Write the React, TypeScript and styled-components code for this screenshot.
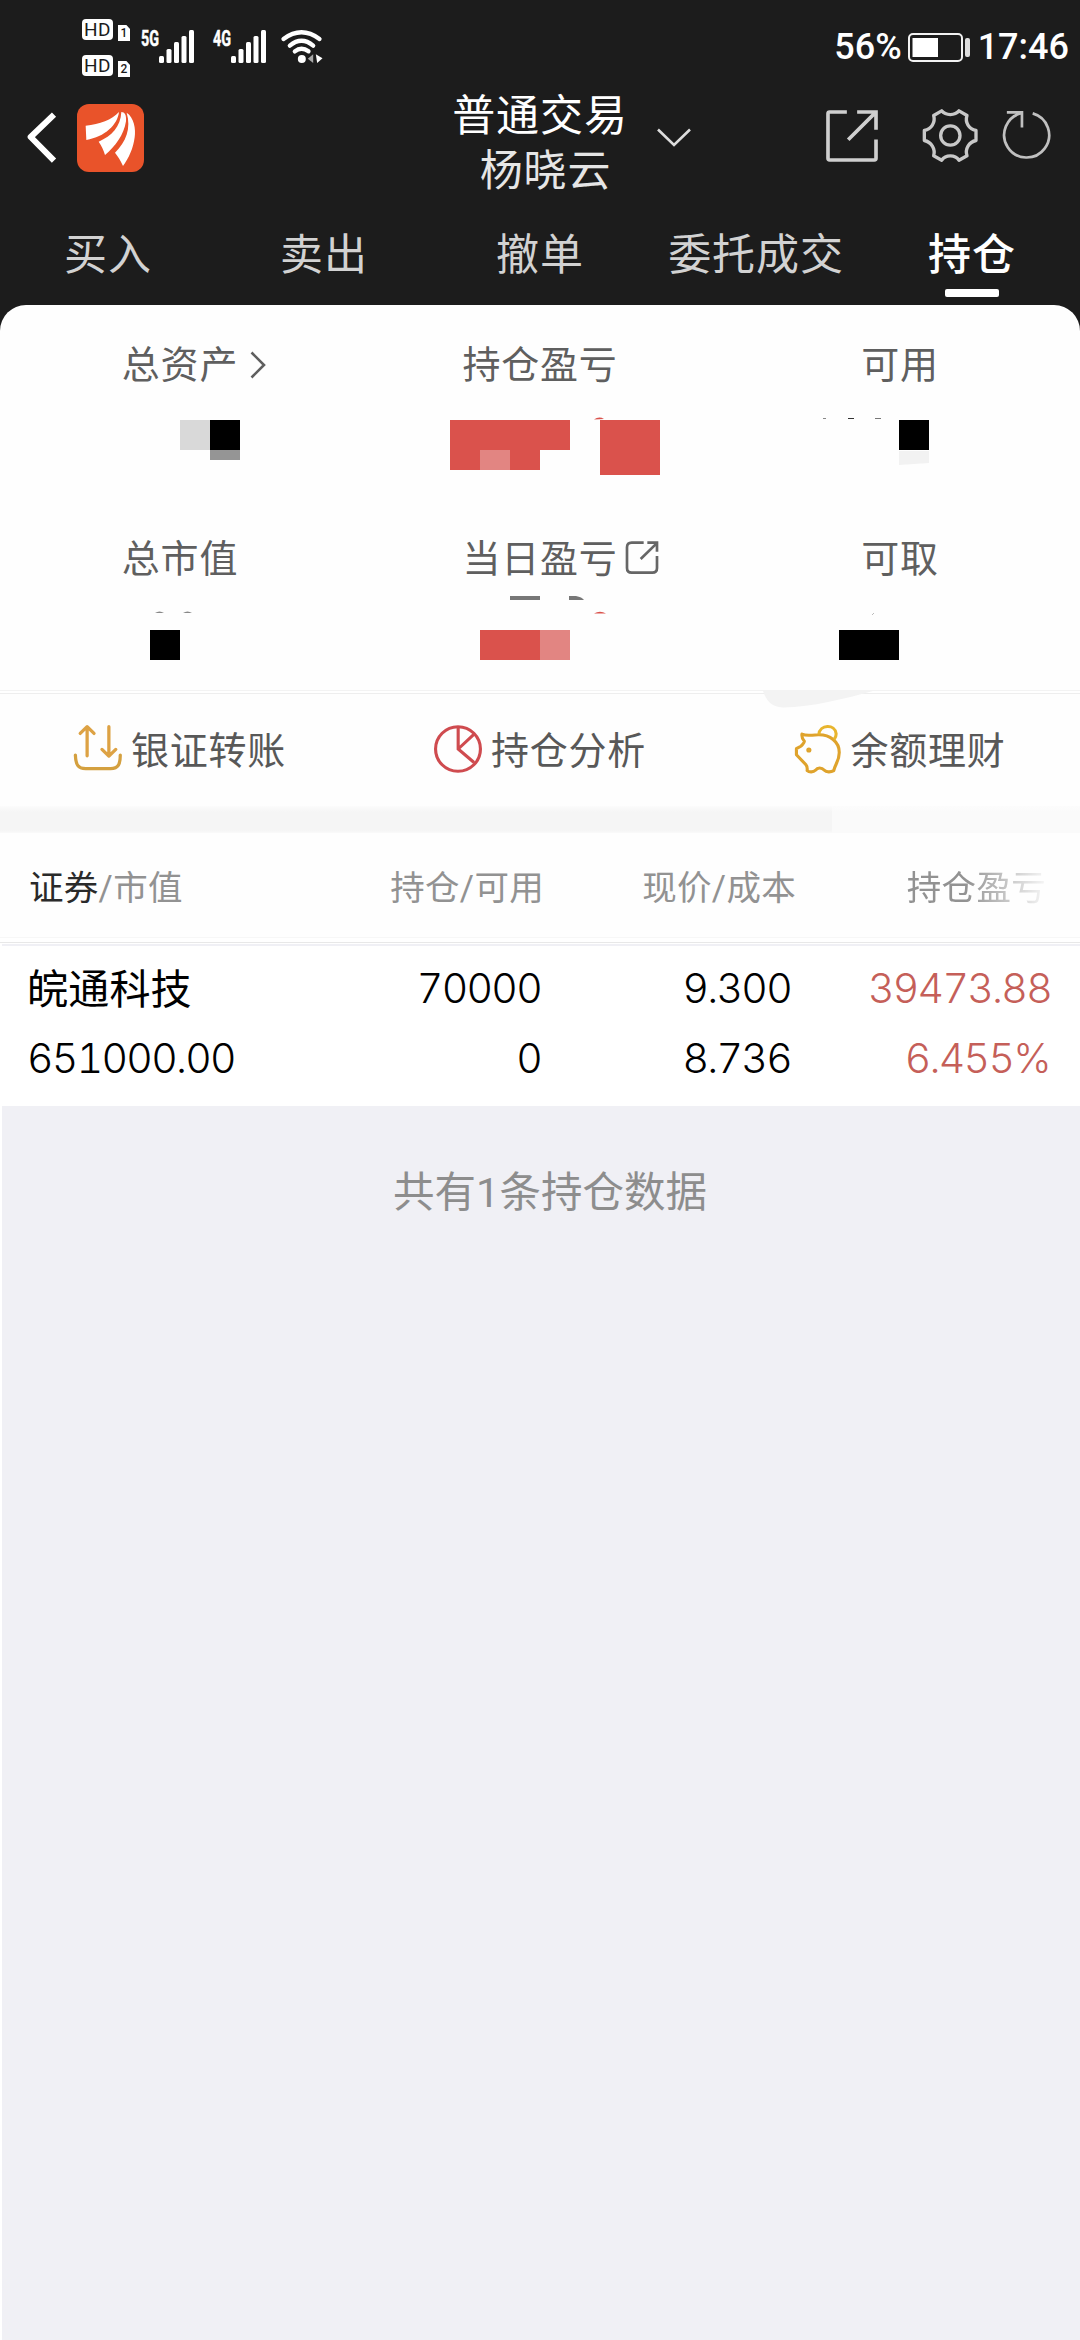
import React from 'react';
import styled, { createGlobalStyle } from 'styled-components';

const Global = createGlobalStyle`
  * { box-sizing: border-box; }
  body { margin: 0; background: #fff; font-family: Roboto, "Noto Sans CJK SC", sans-serif; }
  svg { display: block; overflow: visible; }
`;

const Screen = styled.div`
  width: 1080px;
  height: 2340px;
  display: flex;
  flex-direction: column;
  background: #fff;
  overflow: hidden;
`;

const Top = styled.header`
  background: #1c1c1c;
  height: 305px;
  flex: none;
`;

const StatusBar = styled.div`
  height: 92px;
  display: flex;
  justify-content: space-between;
  align-items: flex-start;
  padding: 19px 11px 0 82px;
`;

const StatusGroup = styled.div`
  display: flex;
  align-items: flex-start;
`;

const HdColumn = styled.div`
  display: flex;
  flex-direction: column;
  gap: 15px;
  margin-right: 11px;
`;

const HdLine = styled.div`
  display: flex;
  align-items: flex-end;
  gap: 5px;
  height: 21px;
`;

const HdBadge = styled.span`
  width: 31px;
  height: 21px;
  border-radius: 4px;
  background: #fff;
  color: #1c1c1c;
  font: 400 19px/22px Roboto, sans-serif;
  letter-spacing: 0.6px;
  text-align: center;
`;

const SimBadge = styled.span`
  width: 12px;
  height: 16px;
  margin-bottom: -1px;
  background: #fff;
  color: #1c1c1c;
  clip-path: polygon(0 0, 70% 0, 100% 25%, 100% 100%, 0 100%);
  font: 500 12px/17px Roboto, sans-serif;
  text-align: center;
`;

const SignalSlot = styled.div<{ $gap: number }>`
  margin-top: 11px;
  margin-right: ${(p) => p.$gap}px;
`;

const StatusText = styled.span`
  color: #fff;
  font: 500 36px/42px Roboto, sans-serif;
  margin-top: 7px;
`;

const BatterySlot = styled.div`
  margin: 14px 8px 0 6px;
`;

const TitleBar = styled.div`
  height: 108px;
  display: grid;
  grid-template-columns: 1fr 1fr 1fr;
`;

const TitleLeft = styled.div`
  display: flex;
  gap: 21px;
  padding: 12px 0 0 28px;
`;

const TitleCenter = styled.div`
  display: flex;
  justify-content: center;
  padding-left: 63px;
  gap: 29px;
`;

const TitleText = styled.div`
  display: flex;
  flex-direction: column;
  align-items: center;
  font-size: 43px;
  line-height: 55px;
  letter-spacing: 0.9px;
  color: #fff;
  margin-top: -3px;
  white-space: nowrap;
`;

const AccountName = styled.span`
  color: #e6e6e6;
  padding-left: 11px;
`;

const CaretSlot = styled.div`
  padding-top: 36px;
`;

const TitleRight = styled.div`
  display: flex;
  justify-content: flex-end;
  padding-right: 28px;
`;

const IconSlot = styled.div<{ $top: number; $left: number }>`
  padding-top: ${(p) => p.$top}px;
  margin-left: ${(p) => p.$left}px;
`;

const Tabs = styled.nav`
  height: 105px;
  display: grid;
  grid-template-columns: repeat(5, 1fr);
`;

const Tab = styled.div<{ $active?: boolean }>`
  display: flex;
  flex-direction: column;
  align-items: center;
  padding-top: 28px;
  font-size: 43px;
  line-height: 54px;
  letter-spacing: 0.9px;
  white-space: nowrap;
  color: ${(p) => (p.$active ? '#fff' : '#d2d2d2')};
  font-weight: ${(p) => (p.$active ? 500 : 400)};
`;

const TabBar = styled.i`
  width: 54px;
  height: 8px;
  border-radius: 2px;
  background: #fff;
  margin-top: 7px;
`;

const SheetBack = styled.div`
  background: #1c1c1c;
  flex: none;
`;

const Sheet = styled.section`
  height: 385px;
  background: #fefefe;
  border-radius: 26px 26px 0 0;
  display: grid;
  grid-template-columns: repeat(3, 1fr);
  grid-template-rows: 194px 191px;
`;

const Cell = styled.div`
  display: flex;
  flex-direction: column;
  align-items: center;
  padding-top: 36px;
`;

const Label = styled.div`
  position: relative;
  height: 47px;
  line-height: 48px;
  font-size: 38px;
  letter-spacing: 0.8px;
  color: #5f5f5f;
  white-space: nowrap;
`;

const LabelMark = styled.span<{ $gap: number; $top: number }>`
  position: absolute;
  left: calc(100% + ${(p) => p.$gap}px);
  top: ${(p) => p.$top}px;
`;

const Divider = styled.div`
  height: 4px;
  flex: none;
  border-top: 1px solid #f3f3f3;
  border-bottom: 1px solid #eeeeee;
`;

const Actions = styled.section`
  position: relative;
  height: 112px;
  flex: none;
  display: grid;
  grid-template-columns: repeat(3, 1fr);
  background: #fefefe;
`;

const Smudge = styled.div`
  position: absolute;
  left: 763px;
  top: -3px;
`;

const Action = styled.div`
  display: flex;
  justify-content: center;
  align-items: flex-start;
  gap: 9px;
  padding-top: 31px;
  font-size: 38px;
  line-height: 52px;
  letter-spacing: 0.8px;
  color: #585858;
`;

const Band = styled.div`
  height: 27px;
  flex: none;
  display: grid;
  grid-template-columns: 832px 1fr;
`;

const BandPart = styled.i<{ $tone: string }>`
  background: linear-gradient(#fcfcfc, ${(p) => p.$tone} 22%, ${(p) => p.$tone} 90%, #fafafa);
`;

const Row = styled.div`
  display: grid;
  grid-template-columns: 27px 267px 250px 252px 1fr 28px;
`;

const HeadRow = styled(Row)`
  height: 104px;
  flex: none;
  padding-top: 30px;
  font-size: 34.5px;
  line-height: 50px;
  letter-spacing: 0.3px;
  color: #929292;
  background: #fefefe;
`;

const HeadCell = styled.div<{ $right?: boolean; $fade?: boolean }>`
  text-align: ${(p) => (p.$right ? 'right' : 'left')};
  padding-left: ${(p) => (p.$right ? 0 : 2)}px;
  padding-right: ${(p) => (p.$fade ? 6 : 0)}px;
  white-space: nowrap;
  ${(p) => p.$fade && 'mask-image: linear-gradient(to right, #000 66%, transparent 100%);'}
`;

const Strong = styled.span`
  color: #2a2a2a;
`;

const Rules = styled.div`
  height: 9px;
  flex: none;
  display: flex;
  flex-direction: column;
  justify-content: space-between;
  border-top: 1px solid #f7f7f7;
  padding-top: 4px;
`;

const Rule = styled.i<{ $h: number; $tone: string; $inset?: number }>`
  height: ${(p) => p.$h}px;
  margin-left: ${(p) => p.$inset ?? 0}px;
  background: ${(p) => p.$tone};
`;

const Holding = styled.section`
  height: 160px;
  flex: none;
  padding-top: 6px;
`;

const DataRow = styled(Row)`
  height: 70px;
`;

const Value = styled.div<{ $tone?: string; $left?: boolean; $pad?: number }>`
  font-family: Inter, sans-serif;
  font-weight: 300;
  font-size: 41px;
  line-height: 72px;
  letter-spacing: -1.7px;
  font-variant-numeric: tabular-nums;
  text-align: ${(p) => (p.$left ? 'left' : 'right')};
  padding-right: ${(p) => p.$pad ?? 0}px;
  color: ${(p) => p.$tone ?? '#000'};
  white-space: nowrap;
`;

const StockName = styled.div`
  font-family: "Noto Sans CJK SC", sans-serif;
  font-weight: 400;
  font-size: 41px;
  line-height: 68px;
  letter-spacing: 0.2px;
  color: #000;
  white-space: nowrap;
`;

const Rest = styled.main`
  flex: 1;
  margin-left: 2px;
  background: #f0f0f5;
  padding-top: 57px;
  padding-left: 18px;
  text-align: center;
  font-size: 41.5px;
  line-height: 60px;
  color: #8d8d8d;
`;

const Signal = ({ tag }: { tag: string }) => (
  <svg width="54" height="33" viewBox="0 0 54 33">
    <text x="0" y="15.500" fill="#fff" stroke="#fff" strokeWidth="0.500" fontFamily="Roboto, sans-serif" fontWeight="700" fontSize="22" textLength="18" lengthAdjust="spacingAndGlyphs">{tag}</text>
    <g fill="#fff">
      <rect x="18" y="26" width="5" height="7" rx="1.5" />
      <rect x="25.500" y="19" width="5" height="14" rx="1.5" />
      <rect x="33" y="12" width="5" height="21" rx="1.5" />
      <rect x="40.500" y="6" width="5" height="27" rx="1.5" />
      <rect x="48" y="0" width="5" height="33" rx="1.5" />
    </g>
  </svg>
);

const Wifi = () => (
  <svg width="42" height="33" viewBox="843 90 123 99" fill="none" stroke="#fff" strokeWidth="13" strokeLinecap="round">
    <path d="M849 117Q903 77 957 117M868 137Q903 108 938 137M883 154Q903 138 924 154" />
    <circle cx="904" cy="177" r="12" fill="#fff" stroke="none" />
    <path d="M922 176L938 163V189Z" fill="#a8a8a8" stroke="none" />
    <path d="M946 163L966 175L950 189Z" fill="#fff" stroke="none" />
  </svg>
);

const Battery = () => (
  <svg width="62" height="29" viewBox="0 0 62 29">
    <rect x="1" y="1" width="53" height="27" rx="4" fill="none" stroke="#f2f2f2" strokeWidth="2" />
    <rect x="4.500" y="5" width="25.500" height="19" fill="#fff" />
    <rect x="57" y="5" width="5" height="19" rx="2" fill="#ddd" />
  </svg>
);

const Back = () => (
  <svg width="28" height="50" viewBox="84 339 84 150" fill="none" stroke="#fff" strokeWidth="18" strokeLinejoin="round">
    <path d="M162 344L92 411L162 482" />
  </svg>
);

const Logo = () => (
  <svg width="67" height="68" viewBox="231 312 201 204">
    <rect x="231" y="312" width="201" height="204" rx="36" fill="#e9532a" />
    <g fill="#fff">
      <path d="M257 377C300 373 335 360 357 336C352 375 315 410 259 420Z" />
      <path d="M364 336C374 336 380 345 378 364C372 405 345 440 315 465C311 450 304 437 296 425C335 408 362 380 364 336Z" />
      <path d="M380 338C402 352 408 388 404 412C400 445 386 475 369 498C362 482 354 469 345 458C378 425 394 385 380 338Z" />
    </g>
  </svg>
);

const Caret = () => (
  <svg width="34" height="19" viewBox="0 0 34 19" fill="none" stroke="#dcdcdc" strokeWidth="2.600">
    <path d="M1 1.500L17 17L33 1.500" />
  </svg>
);

const Share = () => (
  <svg width="52" height="52" viewBox="321 329 157 157" fill="none" stroke="#cfcfcf" strokeWidth="11">
    <path d="M384 335H332Q327 335 327 340V475Q327 480 332 480H467Q472 480 472 475V418" />
    <path d="M415 335H472V389M470 337L388 419" />
  </svg>
);

const Gear = () => (
  <svg width="54" height="53" viewBox="612 326 162 158" fill="none" stroke="#c8c8c8" strokeWidth="10" strokeLinejoin="round">
    <path d="M668 331C680 346 708 346 720 331L744 345C737 366 750 386 771 390V420C750 424 737 446 744 466L720 479C708 462 680 462 668 479L644 466C650 446 637 424 616 420V390C637 386 650 366 644 345Z" />
    <circle cx="694" cy="405" r="29" />
  </svg>
);

const Refresh = () => (
  <svg width="48" height="47" viewBox="855 334 142 140" fill="none" stroke="#c0c0c0" strokeWidth="8">
    <path d="M940 341A67 67 0 1 1 908 340M863 338H908V383" />
  </svg>
);

const Chevron = () => (
  <svg width="16" height="28" viewBox="0 0 16 28" fill="none" stroke="#5f5f5f" strokeWidth="2.600">
    <path d="M1.500 1.500L14 14L1.500 26.500" />
  </svg>
);

const OpenBox = () => (
  <svg width="34" height="34" viewBox="672 694 102 102" fill="none" stroke="#666" strokeWidth="8">
    <path d="M728 699H692Q678 699 678 713V775Q678 789 692 789H754Q768 789 768 775V739" />
    <path d="M739 699H768V726M767 701L719 748" />
  </svg>
);

const Transfer = () => (
  <svg width="48" height="46" viewBox="214 136 139 136" preserveAspectRatio="none" fill="none" stroke="#dda244" strokeWidth="9.500" strokeLinecap="round" strokeLinejoin="round">
    <path d="M252 227V141M232 161L252 141L272 161M315 141V227M295 208L315 228L335 208" />
    <path d="M218 225C219 253 225 265 248 265H320C343 265 348 251 348 225" stroke="#d4a03f" />
  </svg>
);

const Pie = () => (
  <svg width="48" height="48" viewBox="1259 134 139 142" preserveAspectRatio="none" fill="none" stroke="#cf4b4f" strokeWidth="9">
    <ellipse cx="1328.500" cy="205" rx="65" ry="66" />
    <path d="M1329 139V205L1375 245M1329 205L1376 160" />
  </svg>
);

const Piggy = () => (
  <svg width="47" height="48" viewBox="736 134 136 142" preserveAspectRatio="none" fill="none" stroke="#dfa32c" strokeWidth="9" strokeLinejoin="round">
    <path d="M759 161C775 168 785 163 806 163C840 162 867 184 867 215C867 240 855 250 851 269C843 274 829 274 824 268C816 259 804 259 798 268C792 274 780 274 774 269C775 262 774 256 770 251L743 222V204L757 196C761 190 766 187 766 182C760 175 758 168 759 161Z" />
    <path d="M808 162C810 132 855 130 858 160Q858 170 852 177" stroke="#e8b52e" />
    <circle cx="779" cy="208" r="3" fill="#dfa32c" />
  </svg>
);

type Block = [x: number, y: number, w: number, h: number, tone: string];

const RED = '#da524c';
const PINK = '#e28582';

const Mosaic = ({ blocks, children }: { blocks: Block[]; children?: React.ReactNode }) => (
  <svg width="360" height="103" viewBox="0 0 360 103">
    {blocks.map(([x, y, w, h, tone], i) => (
      <rect key={i} x={x} y={y} width={w} height={h} fill={tone} />
    ))}
    {children}
  </svg>
);

const App = () => (
  <>
    <Global />
    <Screen>
      <Top>
        <StatusBar>
          <StatusGroup>
            <HdColumn>
              <HdLine><HdBadge>HD</HdBadge><SimBadge>1</SimBadge></HdLine>
              <HdLine><HdBadge>HD</HdBadge><SimBadge>2</SimBadge></HdLine>
            </HdColumn>
            <SignalSlot $gap={18}><Signal tag="5G" /></SignalSlot>
            <SignalSlot $gap={14}><Signal tag="4G" /></SignalSlot>
            <SignalSlot $gap={0}><Wifi /></SignalSlot>
          </StatusGroup>
          <StatusGroup>
            <StatusText>56%</StatusText>
            <BatterySlot><Battery /></BatterySlot>
            <StatusText>17:46</StatusText>
          </StatusGroup>
        </StatusBar>
        <TitleBar>
          <TitleLeft>
            <IconSlot $top={9} $left={0}><Back /></IconSlot>
            <Logo />
          </TitleLeft>
          <TitleCenter>
            <TitleText>
              <span>普通交易</span>
              <AccountName>杨晓云</AccountName>
            </TitleText>
            <CaretSlot><Caret /></CaretSlot>
          </TitleCenter>
          <TitleRight>
            <IconSlot $top={18} $left={0}><Share /></IconSlot>
            <IconSlot $top={17} $left={45}><Gear /></IconSlot>
            <IconSlot $top={19} $left={27}><Refresh /></IconSlot>
          </TitleRight>
        </TitleBar>
        <Tabs>
          <Tab>买入</Tab>
          <Tab>卖出</Tab>
          <Tab>撤单</Tab>
          <Tab>委托成交</Tab>
          <Tab $active>持仓<TabBar /></Tab>
        </Tabs>
      </Top>
      <SheetBack>
        <Sheet>
          <Cell>
            <Label>总资产<LabelMark $gap={12} $top={10}><Chevron /></LabelMark></Label>
            <Mosaic blocks={[[180, 32, 30, 30, '#d9d9d9'], [210, 32, 30, 30, '#000'], [210, 62, 30, 10, '#959595']]} />
          </Cell>
          <Cell>
            <Label>持仓盈亏</Label>
            <Mosaic blocks={[[90, 32, 120, 30, RED], [90, 62, 30, 20, RED], [120, 62, 30, 20, PINK], [150, 62, 30, 20, RED], [240, 32, 60, 55, RED]]}>
              <path d="M234 31.500Q239 28 244 31Z" fill={RED} />
            </Mosaic>
          </Cell>
          <Cell>
            <Label>可用</Label>
            <Mosaic blocks={[[103, 30, 3, 1, '#888'], [128, 30, 6, 1, '#333'], [155, 30, 6, 1, '#777'], [179, 32, 30, 30, '#000']]}>
              <path d="M179 63H209V75L179 77Z" fill="#f2f2f2" />
            </Mosaic>
          </Cell>
          <Cell>
            <Label>总市值</Label>
            <Mosaic blocks={[[150, 48, 30, 30, '#000']]}>
              <path d="M155 31Q159.500 28 164 31ZM183 31Q187.500 28 192 31Z" fill="#888" />
            </Mosaic>
          </Cell>
          <Cell>
            <Label>当日盈亏<LabelMark $gap={7} $top={6}><OpenBox /></LabelMark></Label>
            <Mosaic blocks={[[150, 14, 30, 4, '#777'], [120, 48, 60, 30, RED], [180, 48, 30, 30, PINK]]}>
              <path d="M209 14H216Q222 15 224 18H209Z" fill="#777" />
              <path d="M234 31.500Q240 28 246 31.500Z" fill={RED} />
            </Mosaic>
          </Cell>
          <Cell>
            <Label>可取</Label>
            <Mosaic blocks={[[119, 48, 60, 30, '#000']]}>
              <path d="M152 33L154 31" stroke="#aaa" strokeWidth="0.800" />
            </Mosaic>
          </Cell>
        </Sheet>
      </SheetBack>
      <Divider />
      <Actions>
        <Smudge>
          <svg width="110" height="17" viewBox="0 0 110 17"><path d="M0 0H110C80 8 50 16 20 16.500C8 16 3 9 0 0Z" fill="#f3f3f3" /></svg>
        </Smudge>
        <Action><Transfer />银证转账</Action>
        <Action><Pie />持仓分析</Action>
        <Action><Piggy />余额理财</Action>
      </Actions>
      <Band><BandPart $tone="#f5f5f5" /><BandPart $tone="#fafafa" /></Band>
      <HeadRow>
        <i />
        <HeadCell><Strong>证券</Strong>/市值</HeadCell>
        <HeadCell $right>持仓/可用</HeadCell>
        <HeadCell $right>现价/成本</HeadCell>
        <HeadCell $right $fade>持仓盈亏</HeadCell>
      </HeadRow>
      <Rules><Rule $h={1} $tone="#e8e8e8" /><Rule $h={2} $tone="#f0f0f5" $inset={2} /></Rules>
      <Holding>
        <DataRow>
          <i />
          <StockName>皖通科技</StockName>
          <Value $pad={3}>70000</Value>
          <Value $pad={5}>9.300</Value>
          <Value $pad={1} $tone="#c55f59">39473.88</Value>
        </DataRow>
        <DataRow>
          <i />
          <Value $left>651000.00</Value>
          <Value $pad={3}>0</Value>
          <Value $pad={5}>8.736</Value>
          <Value $pad={2} $tone="#c55f59">6.455%</Value>
        </DataRow>
      </Holding>
      <Rest>共有1条持仓数据</Rest>
    </Screen>
  </>
);

export default App;
